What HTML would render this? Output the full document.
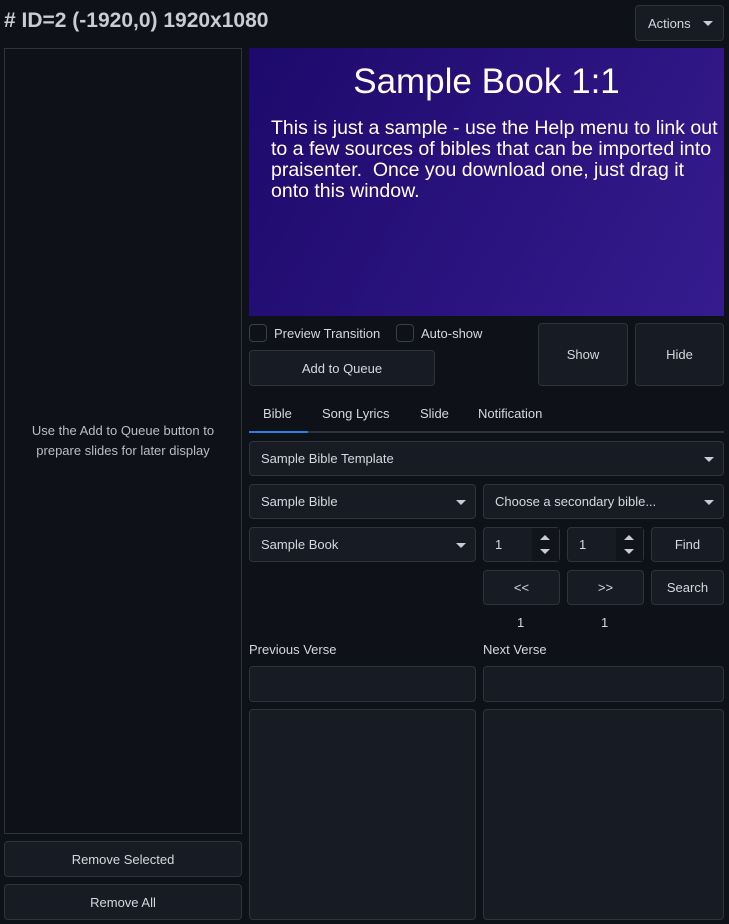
<!DOCTYPE html>
<html><head><meta charset="utf-8"><style>
*{box-sizing:border-box;margin:0;padding:0}
body{width:729px;height:924px;background:#0e1118;color:#d5d8de;font-family:"Liberation Sans",sans-serif;font-size:13px;position:relative;overflow:hidden}
.a{position:absolute}
.b{position:absolute;background:#171b23;border:1px solid #2f333b;border-radius:4px;display:flex;align-items:center;justify-content:center;color:#d5d8de}
.s{justify-content:flex-start;padding-left:11px}
.car{position:absolute;right:9px;top:50%;margin-top:-2px;width:0;height:0;border-left:5px solid transparent;border-right:5px solid transparent;border-top:5px solid #c8ccd3}
.chk{position:absolute;width:18px;height:18px;border:1px solid #3a3e46;border-radius:4px;background:#0e1118}
.spin{position:absolute;right:0;top:0;bottom:0;width:27px;background:#11141b}
.up,.dn{position:absolute;left:8px;width:0;height:0;border-left:5px solid transparent;border-right:5px solid transparent}
.up{top:7px;border-bottom:5px solid #c8ccd3}.dn{bottom:7px;border-top:5px solid #c8ccd3}
</style></head><body>
<div class="a" style="left:4px;top:9px;font-size:21px;font-weight:bold;color:#c9ccd2">#&nbsp;ID=2 (-1920,0) 1920x1080</div>
<div class="b" style="left:635px;top:5px;width:89px;height:36px;justify-content:flex-start;padding-left:12px">Actions<div class="car" style="right:10px"></div></div>
<div class="a" style="left:4px;top:48px;width:238px;height:786px;border:1px solid #2f333b;display:flex;align-items:center;justify-content:center;text-align:center;line-height:20px;color:#b9bdc4">Use the Add to Queue button to<br>prepare slides for later display</div>
<div class="b" style="left:4px;top:841px;width:238px;height:36px">Remove Selected</div>
<div class="b" style="left:4px;top:884px;width:238px;height:36px">Remove All</div>
<div class="a" style="left:249px;top:48px;width:475px;height:268px;background:linear-gradient(120deg,#1d0a6c 0%,#2a137e 55%,#351c8e 100%);color:#fff">
<div style="text-align:center;font-size:35px;margin-top:14px">Sample Book 1:1</div>
<div style="font-size:19.5px;line-height:21px;margin:16px 0 0 22px;width:460px;white-space:nowrap">This is just a sample - use the Help menu to link out<br>to a few sources of bibles that can be imported into<br>praisenter.&nbsp; Once you download one, just drag it<br>onto this window.</div>
</div>
<div class="chk" style="left:249px;top:324px"></div><div class="a" style="left:274px;top:326px">Preview Transition</div>
<div class="chk" style="left:396px;top:324px"></div><div class="a" style="left:421px;top:326px">Auto-show</div>
<div class="b" style="left:249px;top:350px;width:186px;height:36px">Add to Queue</div>
<div class="b" style="left:538px;top:323px;width:90px;height:63px">Show</div>
<div class="b" style="left:635px;top:323px;width:89px;height:63px">Hide</div>
<div class="a" style="left:263px;top:406px">Bible</div>
<div class="a" style="left:322px;top:406px">Song Lyrics</div>
<div class="a" style="left:420px;top:406px">Slide</div>
<div class="a" style="left:478px;top:406px">Notification</div>
<div class="a" style="left:249px;top:431px;width:475px;height:2px;background:#2f333b"></div>
<div class="a" style="left:249px;top:431px;width:59px;height:2px;background:#2e7de0"></div>
<div class="b s" style="left:249px;top:441px;width:475px;height:35px">Sample Bible Template<div class="car"></div></div>
<div class="b s" style="left:249px;top:484px;width:227px;height:35px">Sample Bible<div class="car"></div></div>
<div class="b s" style="left:483px;top:484px;width:241px;height:35px">Choose a secondary bible...<div class="car"></div></div>
<div class="b s" style="left:249px;top:527px;width:227px;height:35px">Sample Book<div class="car"></div></div>
<div class="b s" style="left:483px;top:527px;width:77px;height:35px">1<div class="spin"><div class="up"></div><div class="dn"></div></div></div>
<div class="b s" style="left:567px;top:527px;width:77px;height:35px">1<div class="spin"><div class="up"></div><div class="dn"></div></div></div>
<div class="b" style="left:651px;top:527px;width:73px;height:35px">Find</div>
<div class="b" style="left:483px;top:570px;width:77px;height:35px">&lt;&lt;</div>
<div class="b" style="left:567px;top:570px;width:77px;height:35px">&gt;&gt;</div>
<div class="b" style="left:651px;top:570px;width:73px;height:35px">Search</div>
<div class="a" style="left:517px;top:615px">1</div>
<div class="a" style="left:601px;top:615px">1</div>
<div class="a" style="left:249px;top:642px">Previous Verse</div>
<div class="a" style="left:483px;top:642px">Next Verse</div>
<div class="b" style="left:249px;top:666px;width:227px;height:36px"></div>
<div class="b" style="left:483px;top:666px;width:241px;height:36px"></div>
<div class="b" style="left:249px;top:709px;width:227px;height:211px"></div>
<div class="b" style="left:483px;top:709px;width:241px;height:211px"></div>
</body></html>
